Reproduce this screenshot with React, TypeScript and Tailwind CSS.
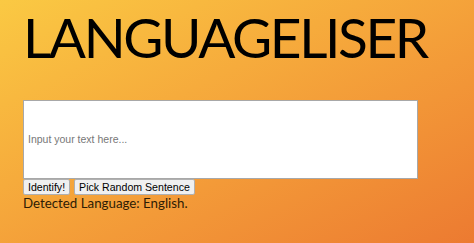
export default function App() {
  return (
    <div className="w-[474px] h-[243px] overflow-hidden bg-gradient-to-br from-[#fac943] to-[#ec7a31] px-[23px]">
      <h1 className="pt-[10px] h-[100px] text-[55px] leading-[55px] text-black tracking-[-2.4px] font-['Lato',sans-serif] font-normal">
        LANGUAGELISER
      </h1>
      <textarea
        placeholder="Input your text here..."
        className="block w-[395px] h-[79px] bg-white border border-[#a8a8a8] px-[4px] pt-[31px] text-[10.5px] leading-[14px] resize-none outline-none text-black placeholder:text-[#777] font-['Liberation_Sans',Arial,sans-serif]"
      />
      <div className="flex gap-[4px] font-['Liberation_Sans',Arial,sans-serif] text-[10.6px] leading-[14px]">
        <button type="button" className="h-[16px] px-[4px] bg-[#f0f0f0] border border-[#b0b0b0] rounded-[2px] text-black">
          Identify!
        </button>
        <button type="button" className="h-[16px] px-[4px] bg-[#f0f0f0] border border-[#b0b0b0] rounded-[2px] text-black">
          Pick Random Sentence
        </button>
      </div>
      <p className="text-[13.3px] leading-[16px] text-[#2e1c04] font-['Lato',sans-serif]">
        Detected Language: English.
      </p>
    </div>
  );
}
